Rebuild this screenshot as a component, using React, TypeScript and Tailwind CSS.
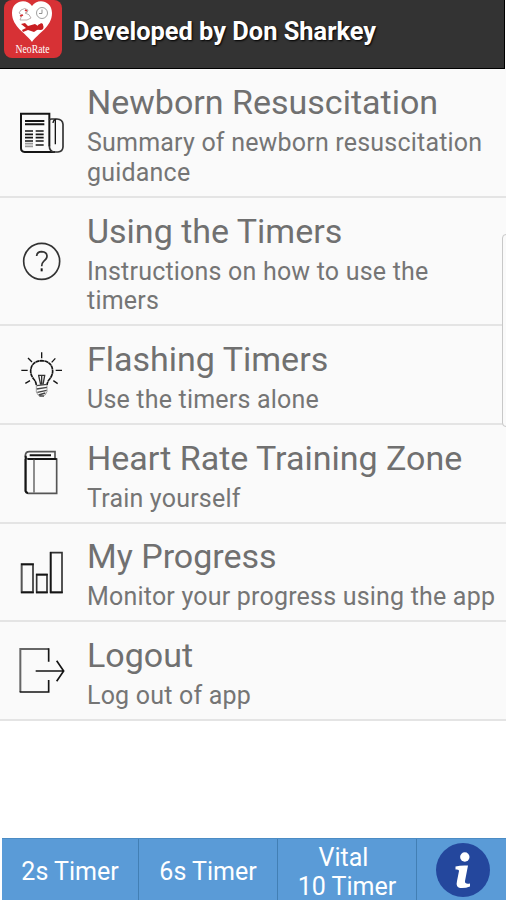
import type { ReactNode } from 'react'

function Icon({ children }: { children: ReactNode }) {
  return (
    <svg viewBox="0 0 180 180" className="ml-[11px] h-[60px] w-[60px] shrink-0" fill="none" stroke="#151515" strokeWidth="5">
      {children}
    </svg>
  )
}

function NewsIcon() {
  return (
    <Icon>
      <path d="M115 130V32H30V136Q30 146 41 147H132" strokeWidth="6" />
      <path d="M115 51Q117 48 122 48H138Q155 49 156 64V132Q155 146 141 147H130Q115 145 115 128" stroke="#333" />
      <path d="M126 60Q127 49 136 49M133 50V124" strokeWidth="4" />
      <path d="M42 54H100M42 64H100" strokeWidth="6" />
      <path d="M42 84H66M74 84H98M42 94H66M74 94H98M42 104H66M74 104H98M42 114H66M74 114H98M74 126H98" strokeWidth="5" />
      <path d="M42 122H66M42 130H66" stroke="#999" />
    </Icon>
  )
}

function QuestionIcon() {
  return (
    <Icon>
      <circle cx="92" cy="91" r="54" stroke="#333" />
      <path d="M77 75Q78 62 92 62Q108 63 108 76Q108 84 98 91Q92 96 92 106" stroke="#333" />
      <path d="M92 112V121" strokeWidth="6" />
    </Icon>
  )
}

function BulbIcon() {
  return (
    <Icon>
      <path d="M92 22V40M51 39L63 51M133 40L122 52M31 76H50M134 76H153M43 115L57 107M127 107L140 116" strokeWidth="4" />
      <path d="M76 120Q75 110 68 102Q59 90 59 79Q60 49 92 47Q124 49 125 79Q125 90 116 102Q109 110 108 120" strokeWidth="5" strokeDasharray="12 1" />
      <path d="M81 91H103M83 92L89 119M92 92V119M101 92L96 119" strokeWidth="4" stroke="#333" />
      <path d="M77 122L108 118M77 132L108 127M79 142L107 136M83 150L103 144M85 153H99" strokeWidth="4" stroke="#444" />
      <path d="M76 119V141Q79 153 92 154Q105 153 108 140V119" strokeWidth="2" stroke="#777" />
    </Icon>
  )
}

function BookIcon() {
  return (
    <Icon>
      <path d="M43 48V145Q44 150 51 151H137V48H50Q43 46 43 37Q44 26 55 26H132V47" stroke="#555" />
      <path d="M44 38V144Q45 149 51 150" strokeWidth="6" />
      <path d="M50 48H137M56 37H120" strokeWidth="6" />
      <path d="M69 50V149" stroke="#777" />
    </Icon>
  )
}

function ChartIcon() {
  return (
    <Icon>
      <path d="M32 67H66V151H32Z" stroke="#555" strokeWidth="6" />
      <path d="M77 98H108V151H77Z" stroke="#333" />
      <path d="M119 32H153V151H119Z" stroke="#333" />
      <path d="M30 67H68M30 151H68M75 98H110M75 151H110M119 30V153M117 151H155" />
    </Icon>
  )
}

function LogoutIcon() {
  return (
    <Icon>
      <path d="M113 24H28V153" stroke="#666" strokeWidth="6" />
      <path d="M113 22V62M113 117V153H26M74 90H157M137 59L158 90L137 121" />
    </Icon>
  )
}

const items = [
  { title: 'Newborn Resuscitation', text: 'Summary of newborn resuscitation guidance', icon: <NewsIcon />, height: 'h-[129px]' },
  { title: 'Using the Timers', text: 'Instructions on how to use the timers', icon: <QuestionIcon />, height: 'h-[128px]' },
  { title: 'Flashing Timers', text: 'Use the timers alone', icon: <BulbIcon />, height: 'h-[99px]' },
  { title: 'Heart Rate Training Zone', text: 'Train yourself', icon: <BookIcon />, height: 'h-[98.5px]' },
  { title: 'My Progress', text: 'Monitor your progress using the app', icon: <ChartIcon />, height: 'h-[98.5px]' },
  { title: 'Logout', text: 'Log out of app', icon: <LogoutIcon />, height: 'h-[99px]' },
]

function Logo() {
  return (
    <svg viewBox="0 0 58 58" className="ml-1 h-[58px] w-[58px] shrink-0">
      <rect width="58" height="58" rx="8" fill="#d73135" />
      <path d="M28 42C22 33 8 27 8 13C8 0 23 -2 28 6C33 -2 48 0 48 13C48 27 34 33 28 42Z" fill="#fff" />
      <circle cx="38" cy="13" r="5.500" fill="#fff" stroke="#888" strokeWidth="0.800" />
      <path d="M38 9.500V13.500H35" fill="none" stroke="#777" strokeWidth="0.800" />
      <path d="M17 10Q21 7 24 10Q24 13 21 13Q26 14 27 18L23 20H16L18 15L15 13Z" fill="#fff" stroke="#a99" strokeWidth="0.800" />
      <path d="M16 16L19 15M21 10L23 11" stroke="#d73135" strokeWidth="1.800" />
      <path d="M17 24L21 23L24 26L31 24L34 26L37 23L39 24L38 29L33 30L30 32L24 30L19 32L18 30L22 28Z" fill="#c91e22" />
      <circle cx="36.500" cy="27" r="3" fill="#c91e22" />
      <text x="28.500" y="53" textAnchor="middle" textLength="34" lengthAdjust="spacingAndGlyphs" fill="#fff" fontSize="11.500" className="font-['Liberation_Serif',serif]">NeoRate</text>
    </svg>
  )
}

function InfoIcon() {
  return (
    <svg viewBox="0 0 54 54" className="h-[54px] w-[54px]">
      <circle cx="27" cy="27" r="27" fill="#24479d" />
      <circle cx="28.800" cy="14" r="4.700" fill="#fff" />
      <path d="M19.500 23.500Q25 22 32 22.500L29 38Q28.500 41.500 34 40.500V43.500Q29 45.500 24 45Q19.500 44 21 38L23 28Q23.500 26 19.500 26.500Z" fill="#fff" />
    </svg>
  )
}

export default function App() {
  return (
    <div className="relative flex h-[900px] w-[506px] flex-col overflow-hidden bg-white font-[Roboto,sans-serif]">
      <header className="mr-px flex h-[69px] shrink-0 items-start border-r border-b border-black bg-[#333]">
        <Logo />
        <h1 className="mt-[15px] ml-[11px] text-[25.4px] leading-[32px] font-bold whitespace-nowrap text-white [text-shadow:1px_1px_2px_#000]">
          Developed by Don Sharkey
        </h1>
      </header>

      <ul className="shrink-0">
        {items.map((item) => (
          <li key={item.title} className={`flex items-center border-b-2 border-[#e4e4e4] bg-[#fafafa] ${item.height}`}>
            {item.icon}
            <div className="ml-4 min-w-0 flex-1 pt-1">
              <h2 className="text-[34px] leading-[40px] whitespace-nowrap text-[#707070]">{item.title}</h2>
              <p className="mt-[6px] text-[25px] leading-[29.5px] tracking-[0.2px] text-[#757575]">{item.text}</p>
            </div>
          </li>
        ))}
      </ul>

      {/* Edge panel handle */}
      <div className="absolute top-[234px] left-[502px] h-[193px] w-2 rounded-l border border-[#c8c8c8] bg-[#fafafa]" />

      <footer className="mt-auto ml-0.5 grid h-[62px] shrink-0 grid-cols-[137px_139px_139px_1fr] border-t border-[#4b8cc4] bg-[#5a9bd7] text-center text-[25px] leading-[30px] text-white">
        <div className="flex items-center justify-center border-r border-[#427fb4] pt-1">2s Timer</div>
        <div className="flex items-center justify-center border-r border-[#427fb4] pt-1">6s Timer</div>
        <div className="flex flex-col items-center justify-center border-r border-[#427fb4] pt-[2px]">
          <span className="mr-[7px] leading-[33px]">Vital</span>
          <span className="leading-[26px]">10 Timer</span>
        </div>
        <div className="flex items-center justify-center pl-[3px]"><InfoIcon /></div>
      </footer>
    </div>
  )
}
